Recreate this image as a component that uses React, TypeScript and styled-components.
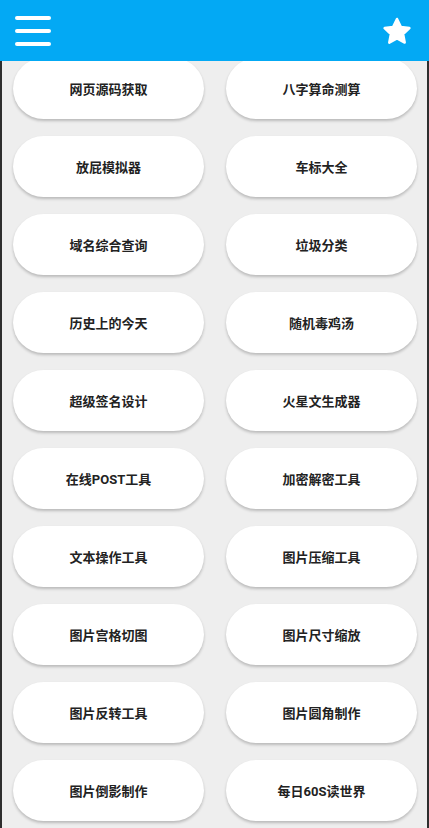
import React from 'react'
import styled, { createGlobalStyle } from 'styled-components'

const tools = [
  '网页源码获取',
  '八字算命测算',
  '放屁模拟器',
  '车标大全',
  '域名综合查询',
  '垃圾分类',
  '历史上的今天',
  '随机毒鸡汤',
  '超级签名设计',
  '火星文生成器',
  '在线POST工具',
  '加密解密工具',
  '文本操作工具',
  '图片压缩工具',
  '图片宫格切图',
  '图片尺寸缩放',
  '图片反转工具',
  '图片圆角制作',
  '图片倒影制作',
  '每日60S读世界',
]

export default function App() {
  return (
    <Page>
      <GlobalStyle />
      <TopBar>
        <IconBtn aria-label="menu">
          <svg width="36" height="32" viewBox="0 0 36 32">
            <g stroke="#fff" strokeWidth="4" strokeLinecap="round">
              <line x1="2" y1="3" x2="34" y2="3" />
              <line x1="2" y1="16" x2="34" y2="16" />
              <line x1="2" y1="29" x2="34" y2="29" />
            </g>
          </svg>
        </IconBtn>
        <IconBtn aria-label="favorite">
          <svg width="30" height="28" viewBox="0 0 30 28">
            <polygon
              points="15,2 18.8,9.9 27.4,11 21.1,17 22.7,25.6 15,21.4 7.3,25.6 8.9,17 2.6,11 11.2,9.9"
              fill="#fff"
              stroke="#fff"
              strokeWidth="2.5"
              strokeLinejoin="round"
            />
          </svg>
        </IconBtn>
      </TopBar>
      <Scroller>
        <Grid>
          {tools.map((t) => (
            <ToolButton key={t}>{t}</ToolButton>
          ))}
        </Grid>
      </Scroller>
    </Page>
  )
}

const GlobalStyle = createGlobalStyle`
  html, body {
    margin: 0;
    padding: 0;
    background: #eeeeee;
  }
  body {
    font-family: Roboto, "Noto Sans CJK SC", "Noto Sans", sans-serif;
  }
`

const Page = styled.div`
  width: 429px;
  height: 828px;
  display: flex;
  flex-direction: column;
  overflow: hidden;
`

const TopBar = styled.header`
  height: 61px;
  flex-shrink: 0;
  background: #03a9f4;
  display: flex;
  align-items: center;
  justify-content: space-between;
  padding: 0 17px 0 15px;
  position: relative;
  z-index: 1;
`

const IconBtn = styled.div`
  display: flex;
  align-items: center;
  justify-content: center;
`

const Scroller = styled.main`
  flex: 1;
  overflow: hidden;
  background: #eeeeee;
  border-left: 2px solid #2e2e2e;
  border-right: 2px solid #2e2e2e;
`

const Grid = styled.div`
  display: grid;
  grid-template-columns: 1fr 1fr;
  column-gap: 22px;
  row-gap: 17px;
  padding: 0 10px 20px 11px;
  margin-top: -3px;
`

const ToolButton = styled.div`
  height: 61px;
  border-radius: 31px;
  background: #ffffff;
  box-shadow: 0 2px 3px rgba(0, 0, 0, 0.22);
  display: flex;
  align-items: center;
  justify-content: center;
  font-size: 13px;
  font-weight: 700;
  color: #222222;
`
